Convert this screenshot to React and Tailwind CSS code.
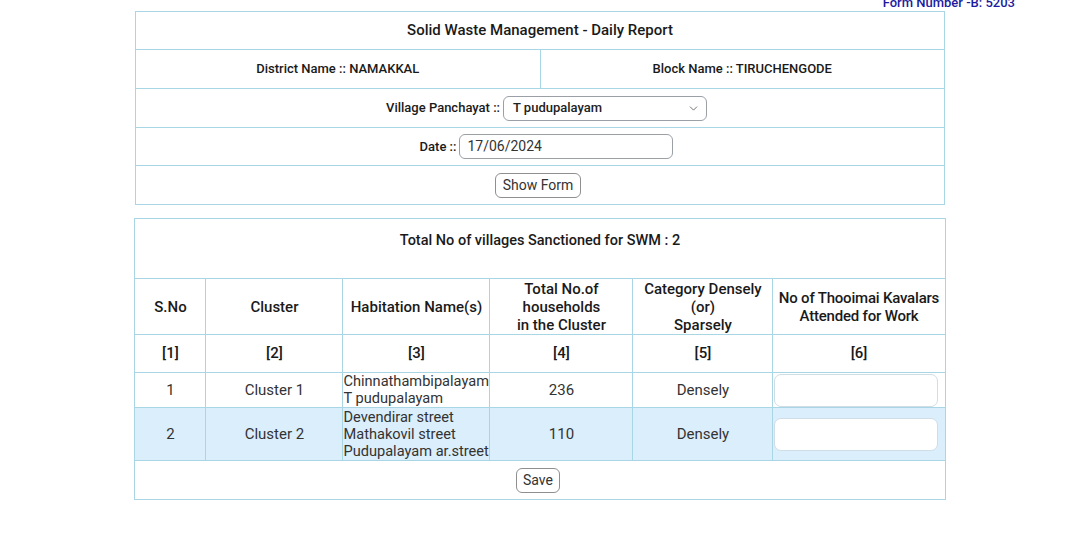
import React from 'react';
import { ChevronDown } from 'lucide-react';

const cell = 'border border-[#a9d6e5]';

const rows = [
  { sno: 1, cluster: 'Cluster 1', habitations: ['Chinnathambipalayam', 'T pudupalayam'], households: 236, category: 'Densely', h: 'h-[35px]', bg: 'bg-white' },
  { sno: 2, cluster: 'Cluster 2', habitations: ['Devendirar street', 'Mathakovil street', 'Pudupalayam ar.street'], households: 110, category: 'Densely', h: 'h-[53px]', bg: 'bg-[#dbeefb]' },
];

const App = () => {
  return (
    <div className="w-[1080px] h-[534px] bg-white overflow-hidden font-['Roboto',sans-serif] text-[#1a1a1a]">
      {/* form number, half cut off at the top */}
      <div className="h-[11px] flex justify-end pr-[65px]">
        <span className="-mt-[5px] text-[13px] leading-[16px] font-medium text-[#1b1ba0]">Form Number -B: 5203</span>
      </div>

      {/* header form */}
      <table className="w-[810px] mx-auto border-collapse table-fixed">
        <tbody>
          <tr className="h-[38px]">
            <td colSpan={2} className={`${cell} text-center text-[15px] font-medium`}>
              Solid Waste Management - Daily Report
            </td>
          </tr>
          <tr className="h-[39px]">
            <td className={`${cell} w-[405px] text-center text-[13px] font-medium`}>District Name :: NAMAKKAL</td>
            <td className={`${cell} text-center text-[13px] font-medium`}>Block Name :: TIRUCHENGODE</td>
          </tr>
          <tr className="h-[39px]">
            <td colSpan={2} className={cell}>
              <div className="flex items-center justify-center pl-[13px]">
                <span className="text-[13px] font-medium mr-[3px]">Village Panchayat ::</span>
                <div className="w-[204px] h-[25px] border border-[#9aa0a6] rounded-[6px] flex items-center justify-between pl-[9px] pr-[6px]">
                  <span className="text-[13px] font-medium text-[#222]">T pudupalayam</span>
                  <ChevronDown className="w-[13px] h-[13px] text-[#555]" strokeWidth={1.5} />
                </div>
              </div>
            </td>
          </tr>
          <tr className="h-[38px]">
            <td colSpan={2} className={cell}>
              <div className="flex items-center justify-center pl-[13px]">
                <span className="text-[13px] font-medium mr-[3px]">Date ::</span>
                <div className="w-[214px] h-[25px] border border-[#9aa0a6] rounded-[6px] flex items-center pl-[7px]">
                  <span className="text-[14px] text-[#333]">17/06/2024</span>
                </div>
              </div>
            </td>
          </tr>
          <tr className="h-[39px]">
            <td colSpan={2} className={cell}>
              <div className="flex justify-center pr-[4px]">
                <button className="h-[25px] px-[7px] border border-[#8f8f8f] rounded-[6px] bg-white text-[14px] text-[#333]">Show Form</button>
              </div>
            </td>
          </tr>
        </tbody>
      </table>

      {/* cluster table */}
      <table className="w-[810px] mx-auto mt-[13px] border-collapse table-fixed">
        <colgroup>
          <col className="w-[71px]" />
          <col className="w-[137px]" />
          <col className="w-[147px]" />
          <col className="w-[143px]" />
          <col className="w-[140px]" />
          <col className="w-[172px]" />
        </colgroup>
        <tbody>
          <tr className="h-[60px]">
            <td colSpan={6} className={`${cell} text-center align-top pt-[11px] text-[14.5px] font-medium`}>
              Total No of villages Sanctioned for SWM : 2
            </td>
          </tr>
          <tr className="h-[56px] text-[15px] font-medium leading-[18px] text-center">
            <td className={cell}>S.No</td>
            <td className={cell}>Cluster</td>
            <td className={cell}>Habitation Name(s)</td>
            <td className={cell}>Total No.of<br />households<br />in the Cluster</td>
            <td className={cell}>Category Densely<br />(or)<br />Sparsely</td>
            <td className={`${cell} whitespace-nowrap tracking-[-0.2px]`}>No of Thooimai Kavalars<br />Attended for Work</td>
          </tr>
          <tr className="h-[38px] text-[15px] font-medium text-center">
            {['[1]', '[2]', '[3]', '[4]', '[5]', '[6]'].map((n) => (
              <td key={n} className={cell}>{n}</td>
            ))}
          </tr>
          {rows.map((r) => (
            <tr key={r.sno} className={`${r.h} ${r.bg} text-[15px] text-[#333] text-center`}>
              <td className={cell}>{r.sno}</td>
              <td className={cell}>{r.cluster}</td>
              <td className={`${cell} text-left text-[14.6px] leading-[17px] px-0 whitespace-nowrap overflow-hidden`}>
                {r.habitations.map((h) => (
                  <div key={h}>{h}</div>
                ))}
              </td>
              <td className={cell}>{r.households}</td>
              <td className={cell}>{r.category}</td>
              <td className={`${cell} px-[1px]`}>
                <div className="w-[164px] h-[33px] bg-white border border-[#cfdde6] rounded-[7px]" />
              </td>
            </tr>
          ))}
          <tr className="h-[39px]">
            <td colSpan={6} className={cell}>
              <div className="flex justify-center pr-[4px]">
                <button className="h-[25px] px-[6px] border border-[#8f8f8f] rounded-[6px] bg-white text-[14px] text-[#333]">Save</button>
              </div>
            </td>
          </tr>
        </tbody>
      </table>
    </div>
  );
};

export default App;
